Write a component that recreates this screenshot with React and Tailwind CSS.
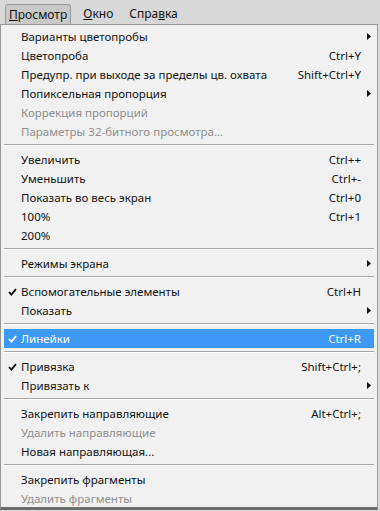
import React from 'react';

const font = { fontFamily: '"Noto Sans", "Open Sans", sans-serif' };

const groups = [
  [
    { label: 'Варианты цветопробы', sub: true },
    { label: 'Цветопроба', key: 'Ctrl+Y' },
    { label: 'Предупр. при выходе за пределы цв. охвата', key: 'Shift+Ctrl+Y' },
    { label: 'Попиксельная пропорция', sub: true },
    { label: 'Коррекция пропорций', off: true },
    { label: 'Параметры 32-битного просмотра...', off: true },
  ],
  [
    { label: 'Увеличить', key: 'Ctrl++' },
    { label: 'Уменьшить', key: 'Ctrl+-' },
    { label: 'Показать во весь экран', key: 'Ctrl+0' },
    { label: '100%', key: 'Ctrl+1' },
    { label: '200%' },
  ],
  [{ label: 'Режимы экрана', sub: true }],
  [
    { label: 'Вспомогательные элементы', key: 'Ctrl+H', check: true },
    { label: 'Показать', sub: true },
  ],
  [{ label: 'Линейки', key: 'Ctrl+R', check: true, active: true }],
  [
    { label: 'Привязка', key: 'Shift+Ctrl+;', check: true },
    { label: 'Привязать к', sub: true },
  ],
  [
    { label: 'Закрепить направляющие', key: 'Alt+Ctrl+;' },
    { label: 'Удалить направляющие', off: true },
    { label: 'Новая направляющая...' },
  ],
  [
    { label: 'Закрепить фрагменты' },
    { label: 'Удалить фрагменты', off: true },
  ],
];

const Arrow = ({ color }) => (
  <svg width="4" height="7" viewBox="0 0 4 7">
    <path d="M0 0 L4 3.5 L0 7 Z" fill={color} />
  </svg>
);

const Check = ({ color }) => (
  <svg width="9" height="8" viewBox="0 0 9 8">
    <path d="M1 4 L3.4 6.6 L8 1.2" stroke={color} strokeWidth="1.8" fill="none" />
  </svg>
);

const Row = ({ item }) => {
  const text = item.active ? 'text-white' : item.off ? 'text-[#8e8e8e]' : 'text-[#111111]';
  const mark = item.active ? '#ffffff' : '#111111';
  return (
    <div className={`flex items-center h-[19px] mx-[3px] ${item.active ? 'bg-[#3d99f5]' : ''} ${text}`}>
      <div className="w-[17px] flex justify-center">{item.check && <Check color={mark} />}</div>
      <span className="flex-1 whitespace-nowrap">{item.label}</span>
      {item.key && <span className="whitespace-nowrap pr-[13px]">{item.key}</span>}
      {item.sub && (
        <div className="pr-[3px] flex items-center">
          <Arrow color={mark} />
        </div>
      )}
    </div>
  );
};

export default function App() {
  return (
    <div className="w-[380px] h-[511px] bg-[#d8d8d8] overflow-hidden leading-none" style={font}>
      {/* Menu bar */}
      <div className="flex items-end h-[24px] pl-[5px] text-[12px] text-[#111111]">
        <div className="h-[20px] px-[3px] flex items-center border border-b-0 border-[#9a9a9a] bg-[#c9c9c9] rounded-t-[3px]">
          <span><span className="underline">П</span>росмотр</span>
        </div>
        <div className="h-[20px] px-[10px] ml-[2px] flex items-center">
          <span><span className="underline">О</span>кно</span>
        </div>
        <div className="h-[20px] px-[6px] flex items-center">
          <span>Спра<span className="underline">в</span>ка</span>
        </div>
      </div>

      {/* Dropdown */}
      <div className="w-[378px] h-[486px] bg-[#f1f1f1] border border-[#979797] border-b-[3px] border-b-[#6e6e6e] pt-[2px] text-[11.5px]">
        {groups.map((g, i) => (
          <div key={i}>
            {i > 0 && (
              <div className="pt-[3px] pb-[4px] mx-[3px]">
                <div className="h-px bg-[#a7a7a7]" />
                <div className="h-px bg-white" />
              </div>
            )}
            {g.map((item, j) => (
              <Row key={j} item={item} />
            ))}
          </div>
        ))}
      </div>
    </div>
  );
}
